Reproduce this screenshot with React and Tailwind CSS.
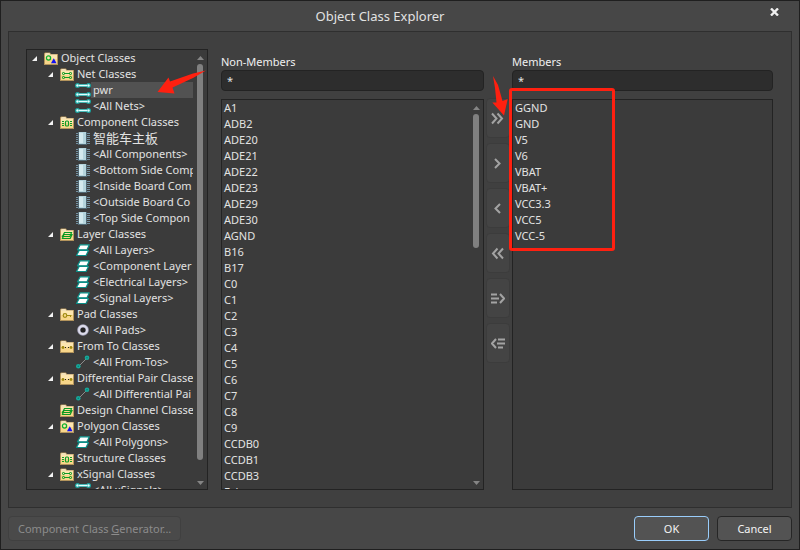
import React from "react";

const treeData = [
  { level: 0, icon: "shapes", label: "Object Classes", open: true },
  { level: 1, icon: "nets", label: "Net Classes", open: true },
  { level: 2, icon: "net", label: "pwr", selected: true },
  { level: 2, icon: "net", label: "<All Nets>" },
  { level: 1, icon: "components", label: "Component Classes", open: true },
  { level: 2, icon: "chip", label: "智能车主板", large: true },
  { level: 2, icon: "chip", label: "<All Components>" },
  { level: 2, icon: "chip", label: "<Bottom Side Comp" },
  { level: 2, icon: "chip", label: "<Inside Board Com" },
  { level: 2, icon: "chip", label: "<Outside Board Co" },
  { level: 2, icon: "chip", label: "<Top Side Compon" },
  { level: 1, icon: "layers", label: "Layer Classes", open: true },
  { level: 2, icon: "layer", label: "<All Layers>" },
  { level: 2, icon: "layer", label: "<Component Layer" },
  { level: 2, icon: "layer", label: "<Electrical Layers>" },
  { level: 2, icon: "layer", label: "<Signal Layers>" },
  { level: 1, icon: "pads", label: "Pad Classes", open: true },
  { level: 2, icon: "pad", label: "<All Pads>" },
  { level: 1, icon: "fromtos", label: "From To Classes", open: true },
  { level: 2, icon: "fromto", label: "<All From-Tos>" },
  { level: 1, icon: "fromtos", label: "Differential Pair Classe", open: true },
  { level: 2, icon: "fromto", label: "<All Differential Pai" },
  { level: 1, icon: "layers", label: "Design Channel Classe" },
  { level: 1, icon: "shapes", label: "Polygon Classes", open: true },
  { level: 2, icon: "layer", label: "<All Polygons>" },
  { level: 1, icon: "components", label: "Structure Classes" },
  { level: 1, icon: "nets", label: "xSignal Classes", open: true },
  { level: 2, icon: "net", label: "<All xSignals>" },
];

const nonMembers = [
  "A1", "ADB2", "ADE20", "ADE21", "ADE22", "ADE23", "ADE29", "ADE30", "AGND",
  "B16", "B17", "C0", "C1", "C2", "C3", "C4", "C5", "C6", "C7", "C8", "C9",
  "CCDB0", "CCDB1", "CCDB3", "Echo",
];

const members = ["GGND", "GND", "V5", "V6", "VBAT", "VBAT+", "VCC3.3", "VCC5", "VCC-5"];

const indent = ["pl-[5px]", "pl-[21px]", "pl-12"];

const folderMarks = {
  shapes: (
    <>
      <circle cx="4.5" cy="6" r="2.1" fill="none" stroke="#0db02b" strokeWidth="1.3" />
      <path d="M7 11.2 9.8 6.2 12.5 11.2Z" fill="#1010f0" />
    </>
  ),
  nets: (
    <g stroke="#109c26" fill="none">
      <path d="M4 5.5h6M4 9.5h6" />
      <rect x="2.5" y="4.5" width="2" height="2" rx=".6" />
      <rect x="9.5" y="4.5" width="2" height="2" rx=".6" />
      <rect x="2.5" y="8.5" width="2" height="2" rx=".6" />
      <rect x="9.5" y="8.5" width="2" height="2" rx=".6" />
    </g>
  ),
  components: (
    <g stroke="#109c26" fill="none">
      <rect x="5.5" y="5" width="3" height="5" rx="1" strokeWidth="1.2" />
      <path d="M2 5.5h2M2 7.5h2M2 9.5h2M10 5.5h2M10 7.5h2M10 9.5h2" />
    </g>
  ),
  layers: (
    <g stroke="#0a9a22" fill="none" strokeWidth="1.2">
      <path d="M4.5 4.5H11.5L10 8.5H2.5Z" />
      <path d="M3.8 6.5H12L10.2 10.5H2.5L3.8 6.5" />
    </g>
  ),
  pads: (
    <g stroke="#a08a10" fill="none">
      <circle cx="5" cy="7.5" r="1.8" strokeWidth="1.2" />
      <path d="M7 7.5h4.5M10.5 7.5v1.5" />
    </g>
  ),
  fromtos: (
    <g>
      <circle cx="3" cy="7.5" r="1.4" fill="#a08a10" />
      <circle cx="11" cy="7.5" r="1.4" fill="#a08a10" />
      <rect x="5" y="7" width="1" height="1" fill="#222" />
      <rect x="8" y="7" width="1" height="1" fill="#222" />
    </g>
  ),
};

function FolderIcon({ name }) {
  return (
    <svg viewBox="0 0 14 13" className="h-[13px] w-[14px] shrink-0" aria-hidden="true">
      <path d="M0 13V1.5L1 .5H6L7 2H14V13Z" fill="#b3945c" />
      <path d="M1 2 1.5 1H5.5L6.3 2.5H13V3H1Z" fill="#f3e0b8" />
      <rect x="1" y="3" width="12" height="9" fill="#f8d68a" />
      <rect x="1" y="3" width="12" height="4" fill="#fde6b0" />
      {folderMarks[name]}
    </svg>
  );
}

const leafDrawings = {
  net: (
    <g>
      <path d="M3 3.5h10M3 12.5h10" stroke="#15a09c" strokeWidth="3" />
      <g fill="#e2ffff" stroke="#15a09c" strokeWidth="1.2">
        <circle cx="2.5" cy="3.5" r="1.9" />
        <circle cx="13.5" cy="3.5" r="1.9" />
        <circle cx="2.5" cy="12.5" r="1.9" />
        <circle cx="13.5" cy="12.5" r="1.9" />
      </g>
      <path d="M4 3.5h8M4 12.5h8" stroke="#e2ffff" strokeWidth="1.4" />
    </g>
  ),
  chip: (
    <g>
      <path
        d="M1 3.5h14M1 5.5h14M1 7.5h14M1 9.5h14M1 11.5h14M1 13.5h14"
        stroke="#7390a0"
      />
      <rect x="3" y="2" width="9" height="13" fill="#506773" />
      <rect x="4" y="2" width="7" height="12" fill="#b4d4dd" />
      <rect x="4" y="3" width="4" height="10" fill="#d3e9ee" />
    </g>
  ),
  layer: (
    <g fill="#fff" stroke="#0a8f88" strokeLinejoin="round" strokeWidth="1.2">
      <path d="M4.2 8.5H13.5L11 13.5H1.5Z" />
      <path d="M5.2 2.8H14.3L12 7.8H2.5Z" />
    </g>
  ),
  pad: (
    <g>
      <circle cx="8" cy="8" r="4.2" fill="#222" stroke="#a5a4bd" strokeWidth="3.2" />
      <circle cx="8" cy="8" r="4" fill="none" stroke="#dcdbe9" strokeWidth="2" />
    </g>
  ),
  fromto: (
    <g>
      <path d="M3.5 12.5 12 4" stroke="#8c8c8c" />
      <circle cx="3.3" cy="12.3" r="2.3" fill="#16a89a" />
      <circle cx="12" cy="3.8" r="2.3" fill="#16a89a" />
      <circle cx="3.3" cy="12.3" r=".8" fill="#087a70" />
      <circle cx="12" cy="3.8" r=".8" fill="#087a70" />
    </g>
  ),
};

function LeafIcon({ name }) {
  return (
    <svg viewBox="0 0 16 16" className="size-4 shrink-0" aria-hidden="true">
      {leafDrawings[name]}
    </svg>
  );
}

function TreeRow({ item }) {
  return (
    <li
      role="treeitem"
      aria-level={item.level + 1}
      aria-selected={Boolean(item.selected)}
      aria-expanded={item.open}
      className={`flex h-4 items-center overflow-hidden whitespace-nowrap ${indent[item.level]}`}
    >
      {item.level < 2 ? (
        <>
          <svg viewBox="0 0 5 5" className="mr-[7px] size-[5px] shrink-0" aria-hidden="true">
            {item.open && <path d="M5 0V5H0Z" fill="#f2f2f2" />}
          </svg>
          <FolderIcon name={item.icon} />
          <span className="pl-[3px]">{item.label}</span>
        </>
      ) : (
        <>
          <LeafIcon name={item.icon} />
          <span
            className={`min-w-0 flex-1 pl-0.5 ${item.selected ? "bg-[#525252]" : ""} ${
              item.large ? "text-[13px]" : ""
            }`}
          >
            {item.label}
          </span>
        </>
      )}
    </li>
  );
}

function Scrollbar({ thumb }) {
  return (
    <div className="flex w-3.5 shrink-0 flex-col items-center pt-1.5 pb-1" aria-hidden="true">
      <svg viewBox="0 0 7 4" className="h-1 w-[7px] shrink-0">
        <path d="M0 4 3.5 0 7 4Z" fill="#858585" />
      </svg>
      <div className="my-1 flex min-h-0 w-1.5 flex-1 flex-col">
        <div className={`rounded-full bg-[#808080] ${thumb}`} />
      </div>
      <svg viewBox="0 0 7 4" className="h-1 w-[7px] shrink-0">
        <path d="M0 0H7L3.5 4Z" fill="#858585" />
      </svg>
    </div>
  );
}

function NameList({ names, label, children }) {
  return (
    <div className="flex min-h-0 flex-1 overflow-hidden border border-[#232323] bg-[#3b3b3b]">
      <ul aria-label={label} className="min-w-0 flex-1 pl-0.5">
        {names.map((name) => (
          <li key={name} className="h-4">
            {name}
          </li>
        ))}
      </ul>
      {children}
    </div>
  );
}

function FilterField({ id, label }) {
  return (
    <>
      <label htmlFor={id} className="text-[#f0f0f0]">
        {label}
      </label>
      <input
        id={id}
        type="text"
        defaultValue="*"
        className="mb-2 h-[21px] w-full rounded border border-[#232323] bg-[#2d2d2d] px-[5px] outline-none"
      />
    </>
  );
}

const transfers = [
  { label: "Add all", d: "M1 2.5 5.5 7.5 1 12.5M6.5 2.5 11 7.5 6.5 12.5" },
  { label: "Add selected", d: "M4 3 8.5 7.5 4 12" },
  { label: "Remove selected", d: "M9 3 4.5 7.5 9 12" },
  { label: "Remove all", d: "M6.5 2.5 2 7.5 6.5 12.5M12 2.5 7.5 7.5 12 12.5" },
  { label: "Add matching", d: "M0 3.5H6M0 7.5H8M0 11.5H6M9 3 13 7.5 9 12" },
  { label: "Remove matching", d: "M5 3 1 7.5 5 12M7 3.5H14M6 7.5H14M7 11.5H12" },
];

export default function App() {
  return (
    <div className="flex h-screen min-h-[400px] flex-col border border-[#1f1f1f] bg-[#474747] font-['Noto_Sans','Noto_Sans_CJK_SC',sans-serif] text-[11px] leading-4 text-[#e2e2e2]">
      <header className="relative flex h-[30px] shrink-0 items-center justify-center pr-10">
        <h1 className="text-[13px]">Object Class Explorer</h1>
        <button type="button" aria-label="Close" className="absolute top-[7px] right-5">
          <svg viewBox="0 0 9 8" className="h-2 w-[9px]" aria-hidden="true">
            <path d="M1 .5 8 7.5M8 .5 1 7.5" stroke="#f0f0f0" strokeWidth="2.4" />
          </svg>
        </button>
      </header>

      <main className="mx-[7px] flex min-h-0 flex-1 border border-[#2f2f2f] bg-[#404040] pr-[18px] pb-[17px] pl-[17px]">
        <div className="relative mt-[17px] mr-[13px] flex w-[182px] shrink-0">
          <div className="flex min-w-0 flex-1 overflow-hidden border border-[#232323] bg-[#3b3b3b]">
            <ul role="tree" aria-label="Object classes" className="min-w-0 flex-1">
              {treeData.map((item, index) => (
                <TreeRow key={index} item={item} />
              ))}
            </ul>
            <Scrollbar thumb="h-[96%]" />
          </div>
          <svg
            viewBox="0 0 49 24"
            className="absolute top-[21px] left-[131px] h-6 w-[49px]"
            aria-hidden="true"
          >
            <path d="M49 .5 36 3.5 13 11.5 11.5 7.5 .5 22 17.5 23.5 15.5 17.5 36 8Z" fill="#ff2010" />
          </svg>
        </div>

        <section className="mt-[22px] flex min-w-0 flex-263 flex-col">
          <FilterField id="non-members-filter" label="Non-Members" />
          <NameList names={nonMembers} label="Non-Members">
            <Scrollbar thumb="h-[37%]" />
          </NameList>
        </section>

        <div className="mt-[66px] flex w-7 shrink-0 flex-col items-center gap-[5px]">
          {transfers.map((item) => (
            <button
              key={item.label}
              type="button"
              aria-label={item.label}
              className="flex h-10 w-6 shrink-0 items-center justify-center rounded-sm border border-[#3c3c3c] bg-[#444444]"
            >
              <svg viewBox="0 0 14 15" className="h-[15px] w-3.5 shrink-0" aria-hidden="true">
                <path d={item.d} fill="none" stroke="#a3a3a3" strokeWidth="2" />
              </svg>
            </button>
          ))}
        </div>

        <section className="relative mt-[22px] flex min-w-0 flex-261 flex-col">
          <FilterField id="members-filter" label="Members" />
          <NameList names={members} label="Members" />
          <div className="absolute top-[34px] -left-[3px] h-[163px] w-[106px] rounded-[3px] border-3 border-[#ff2010]" />
          <svg
            viewBox="0 0 17 40"
            className="absolute top-[22px] -left-5 h-10 w-[17px]"
            aria-hidden="true"
          >
            <path d="M1 0 6 9 10.5 25 15.7 23 12 39.5 .3 26.5 4.5 26.5 3 12Z" fill="#ff2010" />
          </svg>
        </section>
      </main>

      <footer className="flex shrink-0 items-center gap-2 px-[7px] py-2">
        <button
          type="button"
          disabled
          className="mr-auto h-[25px] rounded border border-[#404040] bg-[#4a4a4a] px-[9px] text-[#8c8c8c]"
        >
          Component Class <span className="underline">G</span>enerator...
        </button>
        <button
          type="button"
          className="h-[25px] w-[75px] rounded border border-[#99cdfb] bg-[#535353] text-[#f4f4f4]"
        >
          OK
        </button>
        <button
          type="button"
          className="h-[25px] w-[75px] rounded border border-[#262626] bg-[#535353] text-[#f4f4f4]"
        >
          Cancel
        </button>
      </footer>
    </div>
  );
}
